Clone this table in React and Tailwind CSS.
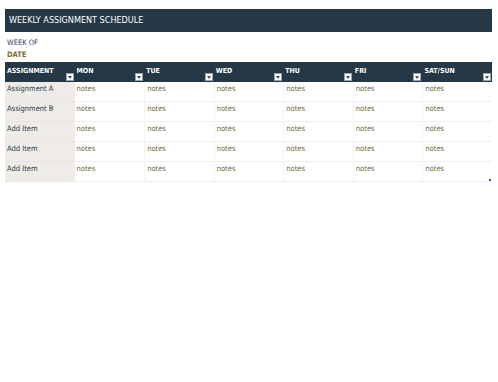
const days = ['MON', 'TUE', 'WED', 'THU', 'FRI', 'SAT/SUN'];
const rows = ['Assignment A', 'Assignment B', 'Add Item', 'Add Item', 'Add Item'];

function FilterButton() {
  return (
    <span className="absolute right-[1px] bottom-[1px] flex h-[8px] w-[8px] items-center justify-center border border-[#9aa3ab] bg-white">
      <svg width="4" height="3" viewBox="0 0 4 3">
        <path d="M0 0h4L2 3z" fill="#4a4a4a" />
      </svg>
    </span>
  );
}

function HeaderCell({ label }) {
  return (
    <div className="relative h-[20px] pl-[2px] pt-[4px] text-[7px] font-bold leading-[10px] text-white">
      {label}
      <FilterButton />
    </div>
  );
}

export default function App() {
  return (
    <div
      className="h-[382px] w-[498px] bg-white pl-[5px] pt-[9px]"
      style={{ fontFamily: '"DejaVu Sans Condensed", "DejaVu Sans", sans-serif' }}
    >
      <div className="flex h-[23px] w-[487px] items-center bg-[#263746] pl-[4px] text-[9px] text-white">
        WEEKLY ASSIGNMENT SCHEDULE
      </div>

      <div className="pl-[2px] pt-[5px] text-[7.5px] leading-[12px]">
        <div className="text-[#2f4257]">WEEK OF</div>
        <div className="font-bold text-[#7d6b2c]">DATE</div>
      </div>

      <div className="relative mt-[1px] w-[487px]">
        <div className="grid grid-cols-7 bg-[#263746]">
          <HeaderCell label="ASSIGNMENT" />
          {days.map((d) => (
            <HeaderCell key={d} label={d} />
          ))}
        </div>

        {rows.map((r, i) => (
          <div key={i} className="grid grid-cols-7">
            <div className="h-[20px] border-b border-[#e9e6e1] bg-[#efebe6] pl-[2px] pt-[2px] text-[7.5px] leading-[10px] text-[#2a3a4c]">
              {r}
            </div>
            {days.map((d, j) => (
              <div
                key={d}
                className={`h-[20px] border-b border-[#efefef] pl-[2px] pt-[2px] text-[7.5px] leading-[10px] text-[#6e6a3c] ${j > 0 ? 'border-l border-l-[#f3f3f3]' : ''}`}
              >
                notes
              </div>
            ))}
          </div>
        ))}

        <span className="absolute right-[1px] bottom-[1px] h-[2px] w-[2px] bg-[#3d4ea8]" />
      </div>
    </div>
  );
}
